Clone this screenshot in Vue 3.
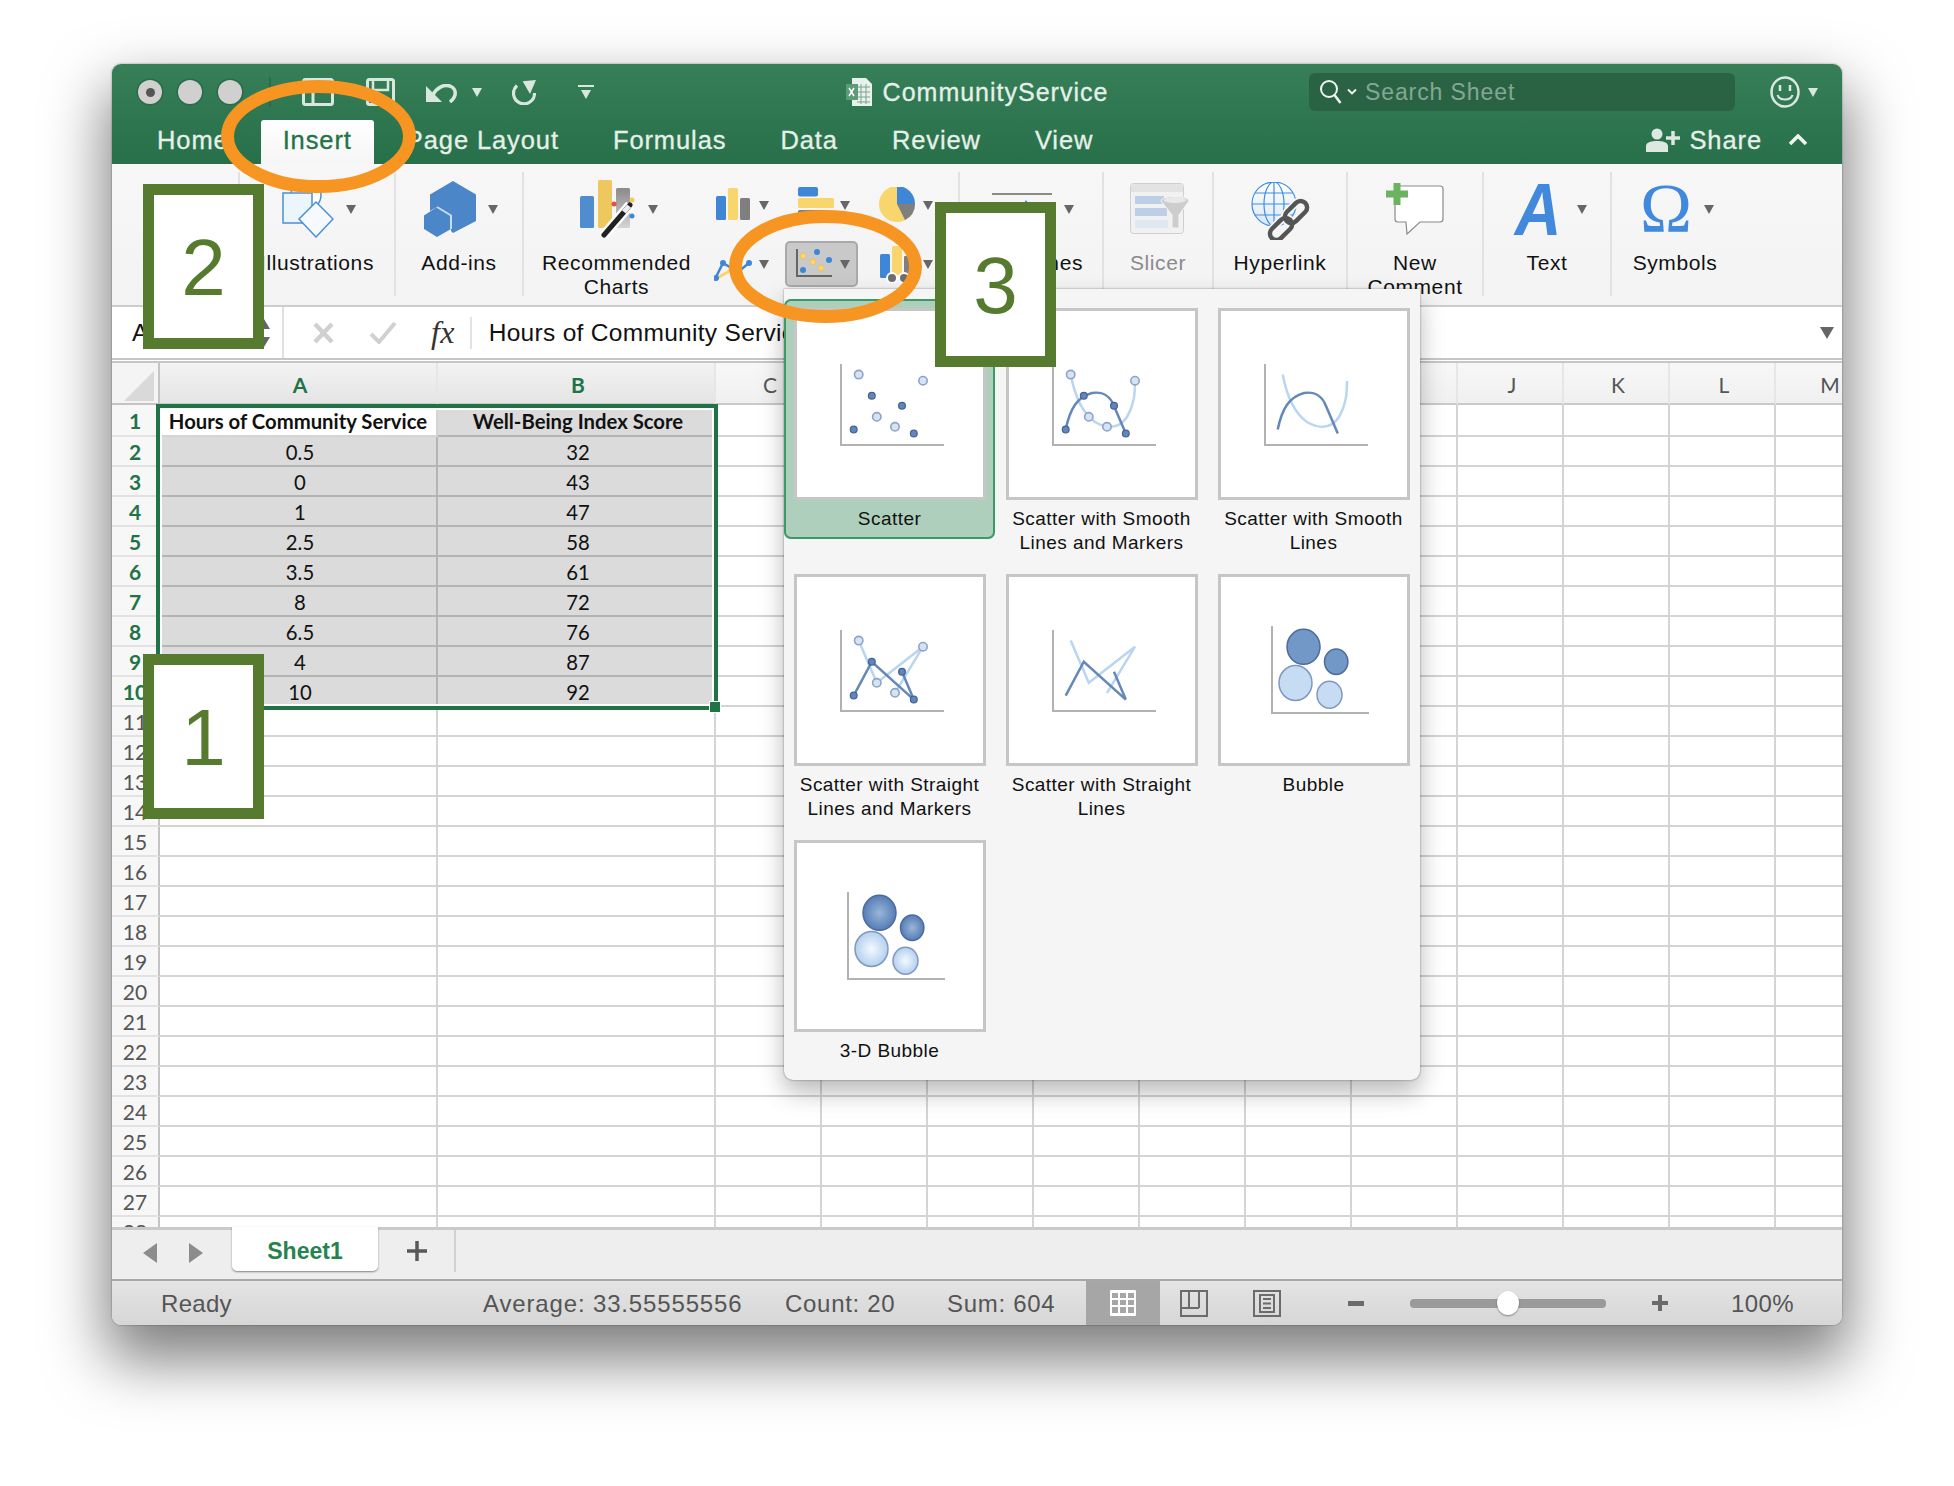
<template>
  <div class="page">
    <div class="window">
      <!-- title bar -->
      <header class="titlebar">
        <div class="tb-left">
          <span class="light"><i></i></span>
          <span class="light"></span>
          <span class="light"></span>
          <span class="tb-divider"></span>
          <svg class="qa qa-layout" width="32" height="28" viewBox="0 0 32 28">
            <rect x="1.500" y="1.500" width="29" height="25" rx="2" fill="none" stroke="#d9e8df" stroke-width="3" />
            <path d="M1 7h30M11 7v20" stroke="#d9e8df" stroke-width="3" fill="none" />
          </svg>
          <svg class="qa qa-save" width="29" height="28" viewBox="0 0 29 28">
            <rect x="1.500" y="1.500" width="26" height="25" rx="2" fill="none" stroke="#d9e8df" stroke-width="3" />
            <path d="M7 2v10h15V2" fill="none" stroke="#d9e8df" stroke-width="2.500" />
          </svg>
          <svg class="qa qa-undo" width="31" height="19" viewBox="0 0 31 19">
            <path d="M7 11C10 4 18 0 24 2c7 3 7 10 0 16" fill="none" stroke="#d9e8df" stroke-width="3.500" />
            <path d="M0 2v16h16z" fill="#d9e8df" />
          </svg>
          <span class="caret light-caret qa-caret"></span>
          <svg class="qa qa-redo" width="25" height="26" viewBox="0 0 25 26">
            <path d="M5 6.500A10.500 10.500 0 1 0 22.500 14" fill="none" stroke="#d9e8df" stroke-width="3.200" />
            <path d="M10.700 2.300L24 1l-6 14z" fill="#d9e8df" />
          </svg>
          <span class="qa-more"><b></b><span class="caret light-caret"></span></span>
        </div>
        <div class="doc-title">
          <svg width="26" height="28" viewBox="0 0 26 28">
            <path d="M6 0h14l6 6v22H6z" fill="#e9f1ec" />
            <path d="M11 9h13M11 14h13M11 19h13M11 24h13M15 6v20M20 6v20" stroke="#7ba48d" stroke-width="1" />
            <rect x="0" y="6" width="12" height="16" fill="#5d9a78" />
            <path d="M3 10l5 8M8 10l-5 8" stroke="#fff" stroke-width="1.500" />
          </svg>
          <span>CommunityService</span>
        </div>
        <div class="tb-right">
          <div class="search">
            <svg width="26" height="26" viewBox="0 0 26 26">
              <circle cx="10" cy="10" r="8" fill="none" stroke="#f0f5f2" stroke-width="2" />
              <path d="M15.500 16l6 8" stroke="#f0f5f2" stroke-width="2.500" />
            </svg>
            <svg class="search-chev" width="10" height="8" viewBox="0 0 10 8">
              <path d="M1 1.500l4 4 4-4" fill="none" stroke="#f0f5f2" stroke-width="1.800" />
            </svg>
            <span>Search Sheet</span>
          </div>
          <svg class="smiley" width="30" height="32" viewBox="0 0 30 32">
            <ellipse cx="15" cy="16" rx="13.500" ry="14.500" fill="none" stroke="#dce8e1" stroke-width="2.500" />
            <path d="M10 9v6M20 9v6" stroke="#dce8e1" stroke-width="2.500" />
            <path d="M7.500 19c2 6 13 6 15 0" fill="none" stroke="#dce8e1" stroke-width="2.200" />
          </svg>
          <span class="caret light-caret"></span>
        </div>
      </header>

      <!-- ribbon tabs -->
      <nav class="tabs">
        <span v-for="tab in tabs" :key="tab" class="tab" :class="{ active: tab === 'Insert' }">{{ tab }}</span>
        <div class="share">
          <svg width="35" height="24" viewBox="0 0 35 24">
            <circle cx="11" cy="6" r="5.500" fill="#dce8e1" />
            <path d="M0 24v-6c0-4 6-5 11-5s11 1 11 5v6z" fill="#dce8e1" />
            <path d="M27 3v14M20 10h14" stroke="#dce8e1" stroke-width="3.500" />
          </svg>
          <span>Share</span>
          <svg class="share-chev" width="20" height="12" viewBox="0 0 20 12">
            <path d="M2 10l8-8 8 8" fill="none" stroke="#f0f5f2" stroke-width="3.500" />
          </svg>
        </div>
      </nav>

      <!-- ribbon -->
      <section class="ribbon">
        <div class="group g-tables">
          <div class="tool">
            <svg width="48" height="50" viewBox="0 0 48 50">
              <rect x="1" y="1" width="46" height="48" fill="#fff" stroke="#777" />
              <rect x="1" y="1" width="46" height="9" fill="#4a8ad4" />
            </svg>
          </div>
          <span class="label">Tables</span>
        </div>

        <div class="group g-illus">
          <div class="tool">
            <svg width="52" height="58" viewBox="0 0 52 58">
              <circle cx="24" cy="15" r="15" fill="#fff" stroke="#4a90d9" stroke-width="1.500" />
              <rect x="1" y="13" width="29" height="30" fill="#ecf4fc" stroke="#4a90d9" stroke-width="1.500" />
              <path d="M34 22l17 17-17 18-17-18z" fill="#f6fafe" stroke="#4a90d9" stroke-width="1.500" />
            </svg>
            <span class="caret"></span>
          </div>
          <span class="label">Illustrations</span>
        </div>

        <div class="group g-addins">
          <div class="tool">
            <svg width="52" height="56" viewBox="0 0 52 56">
              <path d="M29 0l23 13.500V40L29 52l-2-2V35L13 26l-7 4V13.500z" fill="#4a86c8" />
              <path d="M13 26l14 8.500V48l-14 8-13-8V34.500z" fill="#4a86c8" />
              <path d="M13 26l14 8.500V48" fill="none" stroke="#c9d9ec" stroke-width="2" />
            </svg>
            <span class="caret"></span>
          </div>
          <span class="label">Add-ins</span>
        </div>

        <div class="group g-charts">
          <div class="rec">
            <div class="tool">
              <svg width="56" height="58" viewBox="0 0 56 58">
                <defs>
                  <linearGradient id="wandBar" x1="0" y1="0" x2="0" y2="1">
                    <stop offset="0" stop-color="#8a8a8a" />
                    <stop offset="1" stop-color="#d4d4d4" />
                  </linearGradient>
                </defs>
                <rect x="0" y="16" width="14" height="32" rx="1.500" fill="#4f8dd0" />
                <rect x="18" y="0" width="14" height="48" rx="1.500" fill="#eec75f" />
                <rect x="36" y="8" width="14" height="40" rx="1.500" fill="url(#wandBar)" />
                <path d="M24 55L50 25" stroke="#fff" stroke-width="10" />
                <path d="M24 55L50 25" stroke="#222" stroke-width="5" stroke-linecap="round" />
                <path d="M44 32l5-6" stroke="#eee" stroke-width="5" />
                <circle cx="34" cy="24" r="2.500" fill="#d9534f" />
                <circle cx="52" cy="20" r="2.500" fill="#f3c85c" />
                <circle cx="52" cy="36" r="2.500" fill="#3f86d6" />
              </svg>
              <span class="caret"></span>
            </div>
            <span class="label">Recommended<br />Charts</span>
          </div>
          <div class="chart-grid">
            <div class="mini">
              <svg width="40" height="36" viewBox="0 0 40 36">
                <rect x="2" y="9" width="10" height="24" rx="1.500" fill="#3f86d6" />
                <rect x="14" y="1" width="10" height="32" rx="1.500" fill="#f9d56e" />
                <rect x="26" y="11" width="10" height="22" rx="1.500" fill="#7f7f7f" />
              </svg>
              <span class="caret"></span>
            </div>
            <div class="mini">
              <svg width="40" height="36" viewBox="-2 0 40 36">
                <rect x="1" y="0" width="20" height="9.500" rx="2" fill="#3f86d6" />
                <rect x="1" y="11" width="36" height="10" rx="1.500" fill="#f9d56e" />
                <rect x="1" y="23" width="30" height="10" rx="1.500" fill="#7f7f7f" />
              </svg>
              <span class="caret"></span>
            </div>
            <div class="mini">
              <svg width="40" height="36" viewBox="-1 0 40 36">
                <circle cx="18" cy="17" r="18" fill="#f9d56e" />
                <path d="M18 17V-1A18 18 0 0 1 36 17z" fill="#3f86d6" />
                <path d="M18 17h18A18 18 0 0 1 26 33z" fill="#7f7f7f" />
              </svg>
              <span class="caret"></span>
            </div>
            <div class="mini">
              <svg width="40" height="36" viewBox="0 0 40 36">
                <path d="M1 33L14 26L30 5" fill="none" stroke="#f9d56e" stroke-width="3" />
                <path d="M1 33L9 17L24 26L35 17" fill="none" stroke="#3f86d6" stroke-width="2.500" />
                <circle cx="2" cy="32" r="3" fill="#3f86d6" />
                <circle cx="9" cy="17" r="3" fill="#3f86d6" />
                <circle cx="35" cy="17" r="3" fill="#3f86d6" />
              </svg>
              <span class="caret"></span>
            </div>
            <div class="mini mini-on">
              <svg width="40" height="30" viewBox="0 0 40 30">
                <path d="M2 0v27h35" fill="none" stroke="#666" stroke-width="2" />
                <circle cx="8" cy="7" r="3" fill="#f9d56e" stroke="#e3b84f" stroke-width=".6" />
                <circle cx="22" cy="3" r="3" fill="#3f86d6" />
                <circle cx="18" cy="13" r="3" fill="#f9d56e" stroke="#e3b84f" stroke-width=".6" />
                <circle cx="34" cy="11" r="3" fill="#3f86d6" />
                <circle cx="26" cy="19" r="3" fill="#f9d56e" stroke="#e3b84f" stroke-width=".6" />
                <circle cx="8" cy="21" r="3" fill="#3f86d6" />
              </svg>
              <span class="caret"></span>
            </div>
            <div class="mini">
              <svg width="40" height="38" viewBox="-2 0 40 38">
                <rect x="0" y="9" width="10" height="24" rx="1.500" fill="#3f86d6" />
                <rect x="12" y="1" width="10" height="29" rx="1.500" fill="#f9d56e" />
                <rect x="24" y="11" width="8" height="19" rx="1" fill="#7f7f7f" />
                <circle cx="12" cy="33" r="6" fill="#fff" />
                <circle cx="24" cy="33" r="6" fill="#fff" />
                <circle cx="12" cy="33" r="4" fill="#6e6e6e" />
                <circle cx="24" cy="33" r="4" fill="#6e6e6e" />
              </svg>
              <span class="caret"></span>
            </div>
          </div>
        </div>

        <div class="group g-spark">
          <div class="tool">
            <svg width="60" height="34" viewBox="0 0 60 34">
              <path d="M0 2h60" stroke="#8a8a8a" stroke-width="2" />
              <path d="M6 26l10-14 8 10 10-14 10 14 10-10v16H6z" fill="#4a8ad4" />
            </svg>
            <span class="caret"></span>
          </div>
          <span class="label">Sparklines</span>
        </div>

        <div class="group g-slicer">
          <div class="tool">
            <svg width="60" height="52" viewBox="0 0 60 52">
              <rect x="0.500" y="0.500" width="53" height="50" rx="3" fill="#f1f1f1" stroke="#cfcfcf" />
              <path d="M1 1h52v8H1z" fill="#e3e3e3" />
              <rect x="5" y="13" width="29" height="8" fill="#bccfe6" />
              <rect x="5" y="25" width="32" height="8" fill="#bccfe6" />
              <rect x="5" y="37" width="33" height="8" fill="#dfe7f1" />
              <path d="M31 18c0-6 28-6 28 0l-10 14v13h-7V32z" fill="#cdcdcd" stroke="#f5f5f5" />
              <ellipse cx="45" cy="17" rx="11" ry="3" fill="#e9e9e9" />
            </svg>
          </div>
          <span class="label muted">Slicer</span>
        </div>

        <div class="group g-link">
          <div class="tool">
            <svg width="60" height="58" viewBox="0 0 60 58">
              <defs>
                <linearGradient id="globeFill" x1="0" y1="0" x2="0" y2="1">
                  <stop offset="0" stop-color="#fff" />
                  <stop offset="1" stop-color="#dbe8f8" />
                </linearGradient>
              </defs>
              <g fill="none" stroke="#3f8ee0" stroke-width="1.200">
                <circle cx="24" cy="22" r="22" fill="url(#globeFill)" />
                <ellipse cx="24" cy="22" rx="10" ry="22" />
                <path d="M2 22h44M5 11h38M5 33h38M24 0v44" />
              </g>
              <g fill="none" stroke="#555" stroke-width="4.500">
                <rect x="33" y="23.500" width="26" height="13" rx="6.500" transform="rotate(-45 46 30)" stroke="#f5f5f5" stroke-width="8" />
                <rect x="18" y="40.500" width="26" height="13" rx="6.500" transform="rotate(-45 31 47)" stroke="#f5f5f5" stroke-width="8" />
                <rect x="33" y="23.500" width="26" height="13" rx="6.500" transform="rotate(-45 46 30)" />
                <rect x="18" y="40.500" width="26" height="13" rx="6.500" transform="rotate(-45 31 47)" />
              </g>
            </svg>
          </div>
          <span class="label">Hyperlink</span>
        </div>

        <div class="group g-comment">
          <div class="tool">
            <svg width="58" height="52" viewBox="0 0 58 52">
              <path d="M12 3h42a3 3 0 0 1 3 3v30a3 3 0 0 1-3 3H34L21 51l-1-12h-8a3 3 0 0 1-3-3V6a3 3 0 0 1 3-3z" fill="#fff" stroke="#8a8a8a" stroke-width="1.200" />
              <path d="M11 0v22M0 11h22" stroke="#6cb35f" stroke-width="7" />
            </svg>
          </div>
          <span class="label">New<br />Comment</span>
        </div>

        <div class="group g-text">
          <div class="tool">
            <span class="glyph-a">A</span>
            <span class="caret"></span>
          </div>
          <span class="label">Text</span>
        </div>

        <div class="group g-symbols">
          <div class="tool">
            <span class="glyph-o">Ω</span>
            <span class="caret"></span>
          </div>
          <span class="label">Symbols</span>
        </div>
      </section>

      <!-- formula bar -->
      <section class="formula">
        <div class="namebox">
          <span>A1</span>
          <div class="name-arrows"><i></i><i></i></div>
        </div>
        <svg class="fb-x" width="21" height="22" viewBox="0 0 21 22">
          <path d="M2 2l17 18M19 2L2 20" stroke="#d0d0d0" stroke-width="4.500" />
        </svg>
        <svg class="fb-check" width="28" height="23" viewBox="0 0 28 23">
          <path d="M2 13l8 8L26 2" fill="none" stroke="#d0d0d0" stroke-width="4" />
        </svg>
        <span class="fx">fx</span>
        <span class="fb-div"></span>
        <span class="fb-text">Hours of Community Service</span>
        <span class="caret fb-caret"></span>
      </section>

      <!-- sheet -->
      <section class="sheet">
        <div class="grid">
          <div class="corner"><i></i></div>
          <div v-for="col in columns" :key="col" class="col-head" :class="{ sel: col === 'A' || col === 'B' }">{{ col }}</div>
          <template v-for="row in rows" :key="row">
            <div class="row-head" :class="{ sel: row <= 10 }">{{ row }}</div>
            <div
              v-for="(col, i) in columns"
              :key="col"
              class="cell"
              :class="{ shaded: i < 2 && row <= 10 && !(i === 0 && row === 1), bold: row === 1 && i < 2, active: row === 1 && i === 0 }"
            >{{ i < 2 ? data[row - 1]?.[i] : '' }}</div>
          </template>
        </div>
        <div class="selection"><i></i></div>
      </section>

      <!-- sheet tabs -->
      <section class="sheet-tabs">
        <span class="nav-l"></span>
        <span class="nav-r"></span>
        <span class="sheet-tab">Sheet1</span>
        <svg class="add" width="20" height="20" viewBox="0 0 20 20">
          <path d="M10 0v20M0 10h20" stroke="#595959" stroke-width="3.500" />
        </svg>
        <span class="st-div"></span>
      </section>

      <!-- status bar -->
      <footer class="status">
        <span class="st st-ready">Ready</span>
        <span class="st st-avg">Average: 33.55555556</span>
        <span class="st st-count">Count: 20</span>
        <span class="st st-sum">Sum: 604</span>
        <div class="view view-on">
          <svg width="26" height="26" viewBox="0 0 26 26">
            <rect width="26" height="26" rx="1" fill="#fff" />
            <path d="M2 3h6v5H2zM10 3h6v5h-6zM18 3h6v5h-6zM2 10h6v5H2zM10 10h6v5h-6zM18 10h6v5h-6zM2 17h6v6H2zM10 17h6v6h-6zM18 17h6v6h-6z" fill="#a6a6a6" />
          </svg>
        </div>
        <div class="view view-2">
          <svg width="28" height="27" viewBox="0 0 28 27">
            <path d="M1 1h26v25H1zM1 18h18M9 1v17M19 1v17" fill="none" stroke="#6b6b6b" stroke-width="2" />
          </svg>
        </div>
        <div class="view view-3">
          <svg width="28" height="27" viewBox="0 0 28 27">
            <path d="M1 1h26v25H1zM7 5h14v17H7z" fill="none" stroke="#6b6b6b" stroke-width="2" />
            <path d="M10 9h8M10 13.500h8M10 18h8" stroke="#6b6b6b" stroke-width="2" />
          </svg>
        </div>
        <span class="zoom-minus"></span>
        <div class="slider"><i></i></div>
        <svg class="zoom-plus" width="16" height="16" viewBox="0 0 16 16">
          <path d="M8 0v16M0 8h16" stroke="#6b6b6b" stroke-width="4" />
        </svg>
        <span class="st st-zoom">100%</span>
      </footer>

      <!-- chart type popup -->
      <div class="popup">
        <div v-for="(chart, i) in charts" :key="chart.label" class="chart-item" :class="{ picked: i === 0 }">
          <div class="thumb">
            <svg width="186" height="186" viewBox="2 2 186 186">
              <defs v-if="chart.kind === 'bubble3d'">
                <radialGradient id="darkBall">
                  <stop offset="0" stop-color="#9ab5d8" />
                  <stop offset="1" stop-color="#557eb6" />
                </radialGradient>
                <radialGradient id="lightBall">
                  <stop offset="0" stop-color="#f4f9fe" />
                  <stop offset="1" stop-color="#b3d0ef" />
                </radialGradient>
              </defs>
              <template v-if="chart.kind.startsWith('bubble')">
                <path d="M53 51v87h97" fill="none" stroke="#b2b2b2" stroke-width="2" />
                <ellipse
                  v-for="b in bubbles"
                  :key="b.x"
                  :cx="b.x"
                  :cy="b.y"
                  :rx="b.r"
                  :ry="b.r + 1"
                  :fill="chart.kind === 'bubble3d' ? `url(#${b.dark ? 'darkBall' : 'lightBall'})` : b.dark ? '#7298c8' : '#c6dcf3'"
                  :stroke="b.dark ? '#4d6a9c' : '#8098c0'"
                  stroke-width="1.500"
                />
              </template>
              <template v-else>
                <path d="M46 55v81h103" fill="none" stroke="#b2b2b2" stroke-width="2" />
                <path
                  v-if="chart.lightPath"
                  :d="chart.lightPath"
                  fill="none"
                  stroke="#b9d5f0"
                  stroke-width="2.500"
                />
                <path
                  v-if="chart.darkPath"
                  :d="chart.darkPath"
                  fill="none"
                  stroke="#6488b8"
                  stroke-width="2.500"
                />
                <template v-if="chart.markers">
                  <circle v-for="p in lightDots" :key="p[0]" :cx="p[0]" :cy="p[1]" r="4.200" fill="#d5e3f3" stroke="#8fa3c9" stroke-width="1.600" />
                  <circle v-for="p in darkDots" :key="p[0]" :cx="p[0]" :cy="p[1]" r="3.400" fill="#6485b5" stroke="#41619a" stroke-width="1.200" />
                </template>
              </template>
            </svg>
          </div>
          <div class="chart-label">{{ chart.label }}</div>
        </div>
      </div>

      <!-- annotations -->
      <svg class="ring ring-1" width="193" height="113" viewBox="0 0 193 113">
        <ellipse cx="96.500" cy="56.500" rx="91" ry="50" fill="none" stroke="#f79523" stroke-width="13" />
      </svg>
      <svg class="ring ring-2" width="191" height="113" viewBox="0 0 191 113">
        <ellipse cx="95.500" cy="56.500" rx="90" ry="50" fill="none" stroke="#f79523" stroke-width="13" />
      </svg>
      <div class="step step-1">1</div>
      <div class="step step-2">2</div>
      <div class="step step-3">3</div>
    </div>
  </div>
</template>

<script setup>
const tabs = ['Home', 'Insert', 'Page Layout', 'Formulas', 'Data', 'Review', 'View']

const columns = ['A', 'B', 'C', 'D', 'E', 'F', 'G', 'H', 'I', 'J', 'K', 'L', 'M']
const rows = Array.from({ length: 28 }, (_, i) => i + 1)

const data = [
  ['Hours of Community Service', 'Well-Being Index Score'],
  ['0.5', '32'],
  ['0', '43'],
  ['1', '47'],
  ['2.5', '58'],
  ['3.5', '61'],
  ['8', '72'],
  ['6.5', '76'],
  ['4', '87'],
  ['10', '92']
]

const lightDots = [[63.7, 65.6], [128, 71.7], [81.8, 107.8], [100, 117.8]]
const darkDots = [[76.8, 86.7], [107, 96.7], [58.7, 120.6], [118.8, 124.6]]

const smoothDark = 'M58.7 120.6C63 100 70 88 85 84C97 82 104 89 107 97L118.8 124.6'
const smoothLight = 'M63.7 65.6C68 88 75 104 88 113C100 120 112 120 120 108C127 96 128 85 128 72'
const straightDark = 'M58.7 120.6L76.8 86.7L118.8 124.6L107 96.7'
const straightLight = 'M63.7 65.6L81.8 107.8L128 71.7L100 117.8'

const charts = [
  { label: 'Scatter', kind: 'scatter', markers: true },
  { label: 'Scatter with Smooth Lines and Markers', kind: 'scatter', markers: true, lightPath: smoothLight, darkPath: smoothDark },
  { label: 'Scatter with Smooth Lines', kind: 'scatter', lightPath: smoothLight, darkPath: smoothDark },
  { label: 'Scatter with Straight Lines and Markers', kind: 'scatter', markers: true, lightPath: straightLight, darkPath: straightDark },
  { label: 'Scatter with Straight Lines', kind: 'scatter', lightPath: straightLight, darkPath: straightDark },
  { label: 'Bubble', kind: 'bubble' },
  { label: '3-D Bubble', kind: 'bubble3d' }
]

const bubbles = [
  { x: 84.5, y: 71.8, r: 16.5, dark: true },
  { x: 117.2, y: 86.8, r: 11.7, dark: true },
  { x: 76.5, y: 108, r: 16.5, dark: false },
  { x: 110.5, y: 119.8, r: 12.5, dark: false }
]
</script>

<style>
body {
  background: #fff;
}
</style>

<style scoped>
.page {
  width: 1954px;
  height: 1486px;
  padding-top: 64px;
  box-sizing: border-box;
  overflow: hidden;
  font-family: "Liberation Sans", Arial, sans-serif;
}
.window {
  position: relative;
  width: 1730px;
  height: 1261px;
  margin: 0 auto;
  border-radius: 9px;
  overflow: hidden;
  background: #fff;
  box-shadow: 0 0 2px rgba(0, 0, 0, 0.45), 0 30px 60px 6px rgba(0, 0, 0, 0.5);
}

/* title bar */
.titlebar {
  height: 56px;
  display: grid;
  grid-template-columns: 1fr auto 1fr;
  align-items: center;
  background: linear-gradient(#367f57, #2e7650);
}
.tb-left {
  display: flex;
  align-items: center;
  padding-left: 26px;
}
.light {
  width: 24px;
  height: 24px;
  border-radius: 50%;
  background: #d0d0d0;
  box-shadow: 0 0 0 1.5px #2a6b48;
  margin-right: 16px;
  display: flex;
  align-items: center;
  justify-content: center;
}
.light i {
  width: 9px;
  height: 9px;
  border-radius: 50%;
  background: #555;
}
.tb-divider {
  width: 2px;
  height: 30px;
  background: #2a6b48;
  margin-left: 11px;
}
.qa-layout { margin-left: 31px; }
.qa-save { margin-left: 32px; }
.qa-undo { margin-left: 31px; margin-top: 2px; }
.qa-caret { margin-left: 15px; }
.qa-redo { margin-left: 30px; }
.qa-more {
  margin-left: 41px;
  display: flex;
  flex-direction: column;
  align-items: center;
  gap: 3px;
}
.qa-more b {
  width: 16px;
  height: 2px;
  background: #d9e8df;
}
.caret {
  display: inline-block;
  width: 0;
  height: 0;
  border-left: 5px solid transparent;
  border-right: 5px solid transparent;
  border-top: 9px solid #666;
  flex-shrink: 0;
}
.light-caret {
  border-top-color: #d9e8df;
}
.doc-title {
  display: flex;
  align-items: center;
  gap: 11px;
  font-size: 25px;
  letter-spacing: 1px;
  color: #e6f0ea;
  -webkit-text-stroke: 0.3px #e6f0ea;
}
.tb-right {
  display: flex;
  align-items: center;
  justify-content: flex-end;
  padding-right: 24px;
}
.search {
  width: 426px;
  height: 38px;
  box-sizing: border-box;
  padding-left: 10px;
  background: #2a6344;
  border-radius: 6px;
  display: flex;
  align-items: center;
  font-size: 23px;
  letter-spacing: 0.9px;
  color: #84a795;
}
.search-chev { margin-left: 2px; margin-right: 8px; }
.smiley { margin-left: 35px; margin-right: 8px; }

/* ribbon tabs */
.tabs {
  height: 44px;
  display: flex;
  align-items: stretch;
  gap: 10px;
  padding-left: 23px;
  background: linear-gradient(#2e7650, #287049);
}
.tab {
  padding: 0 22px;
  font-size: 25.500px;
  letter-spacing: 0.9px;
  line-height: 40px;
  color: #e6f0ea;
  -webkit-text-stroke: 0.3px #e6f0ea;
  border-radius: 3px 3px 0 0;
}
.tab.active {
  background: linear-gradient(#fff, #f5f5f5);
  color: #217346;
  -webkit-text-stroke: 0.3px #217346;
}
.share {
  margin-left: auto;
  display: flex;
  align-items: center;
  padding-right: 34px;
  padding-bottom: 4px;
  gap: 8px;
  font-size: 25.500px;
  letter-spacing: 0.9px;
  color: #e6f0ea;
  -webkit-text-stroke: 0.3px #e6f0ea;
}
.share-chev { margin-left: 18px; }

/* ribbon */
.ribbon {
  height: 143px;
  box-sizing: border-box;
  padding-top: 8px;
  display: flex;
  background: linear-gradient(#f7f7f7, #f3f3f3);
  border-bottom: 2px solid #cdcdcd;
}
.group {
  height: 124px;
  box-sizing: border-box;
  border-right: 2px solid #e2e2e2;
  display: flex;
  flex-direction: column;
  align-items: center;
  overflow: hidden;
  flex-shrink: 0;
}
.g-tables { width: 128px; }
.g-illus { width: 156px; }
.g-addins { width: 128px; }
.g-charts { width: 436px; flex-direction: row; align-items: flex-start; }
.g-spark { width: 144px; }
.g-slicer { width: 110px; }
.g-link { width: 134px; }
.g-comment { width: 136px; }
.g-text { width: 128px; }
.g-symbols { width: 126px; border-right: 0; }
.tool {
  height: 79px;
  flex-shrink: 0;
  display: flex;
  align-items: center;
  gap: 12px;
  padding-bottom: 5px;
  padding-left: 4px;
  box-sizing: border-box;
}
.g-link .tool,
.g-comment .tool {
  padding-left: 0;
}
.g-link .tool {
  padding-bottom: 1px;
}
.label {
  font-size: 21px;
  letter-spacing: 0.6px;
  line-height: 24px;
  text-align: center;
  color: #111;
}
.label.muted {
  color: #8a8a8a;
}
.rec {
  width: 183px;
  box-sizing: border-box;
  padding-left: 5px;
  display: flex;
  flex-direction: column;
  align-items: center;
}
.chart-grid {
  padding-top: 10px;
  display: grid;
  grid-template-columns: 71px 73px 90px;
  grid-template-rows: 46px 46px;
  column-gap: 10px;
  row-gap: 13px;
}
.mini {
  box-sizing: border-box;
  padding-left: 10px;
  display: flex;
  align-items: center;
  gap: 5px;
}
.mini-on {
  background: #c9c9c9;
  border: 2px solid #a9a9a9;
  border-radius: 5px;
  padding-left: 8px;
}
.glyph-a {
  display: inline-block;
  font-size: 75px;
  line-height: 74px;
  font-style: italic;
  font-weight: 700;
  color: #4189dc;
  transform: scaleX(0.86);
}
.glyph-o {
  font-family: "Liberation Serif", serif;
  font-size: 70px;
  line-height: 74px;
  color: #4189dc;
}

/* formula bar */
.formula {
  height: 56px;
  box-sizing: border-box;
  display: flex;
  align-items: center;
  background: #fff;
  border-bottom: 5px double #c6c6c6;
  font-size: 24.500px;
  letter-spacing: 0.3px;
  color: #111;
}
.namebox {
  width: 172px;
  height: 100%;
  box-sizing: border-box;
  padding-left: 20px;
  padding-right: 12px;
  border-right: 2px solid #e0e0e0;
  display: flex;
  align-items: center;
  justify-content: space-between;
}
.name-arrows {
  display: flex;
  flex-direction: column;
  gap: 8px;
}
.name-arrows i {
  width: 0;
  height: 0;
  border-left: 6px solid transparent;
  border-right: 6px solid transparent;
  border-bottom: 10px solid #666;
}
.name-arrows i + i {
  border-bottom: 0;
  border-top: 10px solid #666;
}
.fb-x { margin-left: 29px; }
.fb-check { margin-left: 35px; }
.fx {
  margin-left: 34px;
  font-family: "Liberation Serif", serif;
  font-style: italic;
  font-size: 32px;
  color: #333;
}
.fb-div {
  width: 2px;
  height: 32px;
  margin-left: 15px;
  background: #e2e2e2;
}
.fb-text { margin-left: 17px; }
.fb-caret {
  margin-left: auto;
  margin-right: 8px;
  border-left-width: 7px;
  border-right-width: 7px;
  border-top-width: 12px;
}

/* sheet */
.sheet {
  position: relative;
  height: 864px;
  overflow: hidden;
}
.grid {
  display: grid;
  grid-template-columns: 48px 278px 278px repeat(11, 106px);
  grid-template-rows: 42px 32px repeat(27, 30px);
  font-family: Lato, "Open Sans", sans-serif;
  font-size: 20.300px;
  color: #111;
}
.corner {
  background: #f4f4f4;
  border-right: 2px solid #c4c4c4;
  border-bottom: 2px solid #c4c4c4;
  position: relative;
}
.corner i {
  position: absolute;
  right: 4px;
  bottom: 2px;
  width: 0;
  height: 0;
  border-left: 30px solid transparent;
  border-bottom: 30px solid #d9d9d9;
}
.col-head {
  display: flex;
  align-items: center;
  justify-content: center;
  background: linear-gradient(#f7f7f7, #f0f0f0);
  border-right: 2px solid #e6e6e6;
  border-bottom: 2px solid #c9c9c9;
  font-size: 21px;
  padding-top: 2px;
  padding-left: 4px;
  color: #555;
}
.col-head.sel {
  background: linear-gradient(#f3f3f3, #e4e4e4);
  color: #217346;
  font-weight: 700;
}
.row-head {
  display: flex;
  align-items: center;
  justify-content: center;
  background: #f7f7f7;
  border-right: 2px solid #c4c4c4;
  border-bottom: 2px solid #e2e2e2;
  font-size: 21px;
  color: #555;
}
.row-head.sel {
  color: #217346;
  font-weight: 700;
}
.cell {
  box-sizing: border-box;
  border-right: 2px solid #d4d4d4;
  border-bottom: 2px solid #d4d4d4;
  padding-top: 1px;
  padding-left: 4px;
  display: flex;
  align-items: center;
  justify-content: center;
  overflow: hidden;
  white-space: nowrap;
}
.cell.shaded {
  background: #dbdbdb;
  border-color: #b4b4b4;
}
.cell.bold {
  font-weight: 700;
}
.cell.active {
  padding-left: 0;
}
.selection {
  position: absolute;
  left: 44px;
  top: 41px;
  width: 562px;
  height: 306px;
  box-sizing: border-box;
  border: 4px solid #217346;
  box-shadow: inset 0 0 0 2px #fff;
}
.selection i {
  position: absolute;
  right: -6px;
  bottom: -6px;
  width: 10px;
  height: 10px;
  background: #217346;
  box-shadow: 0 0 0 1px #fff;
}

/* sheet tabs */
.sheet-tabs {
  height: 52px;
  box-sizing: border-box;
  border-top: 3px solid #cacaca;
  background: #eeeeee;
  display: flex;
  align-items: flex-start;
}
.nav-l,
.nav-r {
  width: 0;
  height: 0;
  margin-top: 13px;
  border-top: 10px solid transparent;
  border-bottom: 10px solid transparent;
}
.nav-l {
  margin-left: 31px;
  border-right: 14px solid #8c8c8c;
}
.nav-r {
  margin-left: 32px;
  border-left: 14px solid #8c8c8c;
}
.sheet-tab {
  margin-left: 29px;
  width: 146px;
  height: 44px;
  margin-top: -3px;
  padding-top: 5px;
  box-sizing: border-box;
  background: #fff;
  border-radius: 0 0 5px 5px;
  box-shadow: 0 1px 2px rgba(0, 0, 0, 0.45);
  text-align: center;
  font-size: 23px;
  line-height: 38px;
  font-weight: 700;
  color: #25834f;
}
.add {
  margin-left: 29px;
  margin-top: 11px;
}
.st-div {
  width: 2px;
  height: 42px;
  margin-left: 27px;
  background: #d2d2d2;
}

/* status bar */
.status {
  height: 46px;
  box-sizing: border-box;
  border-top: 2px solid #a8a8a8;
  background: linear-gradient(#e4e4e4, #d6d6d6);
  padding-left: 49px;
  display: flex;
  align-items: center;
}
.st {
  padding-top: 1px;
  font-size: 24px;
  letter-spacing: 0.7px;
  color: #555;
  white-space: nowrap;
}
.st-ready { width: 322px; letter-spacing: 0.3px; }
.st-avg { width: 302px; letter-spacing: 0.85px; }
.st-count { width: 162px; }
.st-sum { width: 139px; }
.view {
  width: 74px;
  height: 100%;
  display: flex;
  align-items: center;
  justify-content: center;
}
.view-on { background: #a6a6a6; }
.view-2 { width: 68px; }
.view-3 { width: 78px; }
.zoom-minus {
  width: 16px;
  height: 5px;
  margin-left: 42px;
  background: #6b6b6b;
}
.slider {
  position: relative;
  width: 196px;
  height: 9px;
  margin-left: 46px;
  border-radius: 4px;
  background: #9a9a9a;
}
.slider i {
  position: absolute;
  left: 87px;
  top: -8px;
  width: 22px;
  height: 24px;
  border-radius: 50%;
  background: #fff;
  box-shadow: 0 1px 2px rgba(0, 0, 0, 0.4);
}
.zoom-plus { margin-left: 46px; }
.st-zoom { margin-left: 63px; letter-spacing: 0.4px; }

/* popup */
.popup {
  position: absolute;
  left: 672px;
  top: 225px;
  width: 636px;
  height: 791px;
  box-sizing: border-box;
  padding-top: 10px;
  display: grid;
  grid-template-columns: repeat(3, 212px);
  grid-auto-rows: 240px;
  row-gap: 26px;
  background: #f5f5f5;
  border-radius: 0 0 9px 9px;
  box-shadow: 0 0 2px rgba(0, 0, 0, 0.5), 0 12px 24px rgba(0, 0, 0, 0.28);
}
.chart-item {
  width: 211px;
  box-sizing: border-box;
  padding-top: 9px;
  border-radius: 7px;
  display: flex;
  flex-direction: column;
  align-items: center;
}
.chart-item.picked {
  background: #aecfbb;
  box-shadow: inset 0 0 0 2px #3d9a68;
}
.thumb {
  width: 192px;
  height: 192px;
  flex-shrink: 0;
  box-sizing: border-box;
  border: 3px solid #c6c6c6;
  background: #fff;
}
.chart-label {
  width: 200px;
  margin-top: 7px;
  font-size: 19px;
  letter-spacing: 0.45px;
  line-height: 24px;
  text-align: center;
  color: #111;
}

/* annotations */
.ring {
  position: absolute;
  overflow: visible;
}
.ring-1 { left: 110px; top: 16px; }
.ring-2 { left: 618px; top: 146px; }
.step {
  position: absolute;
  width: 121px;
  height: 165px;
  box-sizing: border-box;
  padding-top: 3px;
  border: 11px solid #567b2e;
  background: #fff;
  display: flex;
  align-items: center;
  justify-content: center;
  font-size: 80px;
  color: #567b2e;
}
.step-1 { left: 31px; top: 590px; }
.step-2 { left: 31px; top: 120px; }
.step-3 { left: 823px; top: 138px; }
</style>
